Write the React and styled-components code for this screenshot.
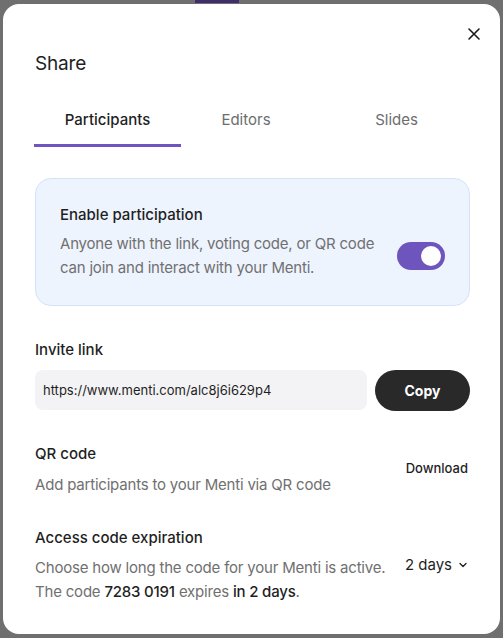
import React, { useState } from 'react';
import styled, { createGlobalStyle } from 'styled-components';

const GlobalStyle = createGlobalStyle`
  html, body {
    margin: 0;
    padding: 0;
    background: #6f6f6f;
  }
  body {
    font-family: Inter, "Noto Sans", Arial, sans-serif;
    color: #1f1f1f;
    -webkit-font-smoothing: antialiased;
  }
`;

const Backdrop = styled.div`
  width: 503px;
  height: 638px;
  overflow: hidden;
  display: flex;
  flex-direction: column;
`;

const BehindBar = styled.div`
  width: 44px;
  height: 3px;
  margin-left: 195px;
  background: #3e2e6b;
  flex-shrink: 0;
`;

const Modal = styled.div`
  margin: 1px 3px 0 3px;
  height: 630px;
  background: #fff;
  border-radius: 16px;
  padding: 0 30px 0 32px;
  box-sizing: border-box;
  display: flex;
  flex-direction: column;
`;

const TopRow = styled.div`
  display: flex;
  justify-content: flex-end;
  padding-top: 20px;
  margin-right: -14px;
`;

const CloseButton = styled.button`
  width: 20px;
  height: 20px;
  border: none;
  background: none;
  padding: 0;
  display: flex;
  align-items: center;
  justify-content: center;
  cursor: pointer;
  color: #1a1a1a;
`;

const Title = styled.h2`
  margin: 8px 0 0 0;
  font-size: 19px;
  font-weight: 400;
  line-height: 24px;
  letter-spacing: -0.2px;
`;

const Tabs = styled.div`
  display: grid;
  grid-template-columns: 147px 130px 1fr;
  margin-top: 33px;
  margin-left: -1px;
  margin-right: 3px;
`;

const Tab = styled.button`
  border: none;
  background: none;
  font-family: inherit;
  font-size: 15px;
  font-weight: ${({ $active }) => ($active ? 500 : 400)};
  color: ${({ $active }) => ($active ? '#1f1f1f' : '#6d6d6d')};
  padding: 0 0 13px ${({ $indent }) => $indent || 0}px;
  line-height: 22px;
  border-bottom: 3px solid ${({ $active }) => ($active ? '#7055c2' : 'transparent')};
  cursor: pointer;
`;

const Card = styled.div`
  margin-top: 31px;
  background: #eef4fe;
  border: 1px solid #d3e2fb;
  border-radius: 16px;
  padding: 24px 24px 25px;
  display: flex;
  align-items: flex-end;
  justify-content: space-between;
  box-sizing: border-box;
  height: 128px;
`;

const CardText = styled.div`
  display: flex;
  flex-direction: column;
`;

const Heading = styled.div`
  font-size: 15px;
  font-weight: 500;
  line-height: 22px;
  color: #1f1f1f;
`;

const Description = styled.div`
  font-size: 15px;
  line-height: 24px;
  letter-spacing: -0.2px;
  color: #707070;
  margin-top: ${({ $mt }) => $mt || 6}px;

  b {
    font-weight: 500;
    color: #1f1f1f;
  }
`;

const SwitchTrack = styled.button`
  width: 48px;
  height: 28px;
  border-radius: 14px;
  border: none;
  padding: 4px;
  background: ${({ $on }) => ($on ? '#6d55bd' : '#c4c4c4')};
  display: flex;
  justify-content: ${({ $on }) => ($on ? 'flex-end' : 'flex-start')};
  align-items: center;
  margin-bottom: 10px;
  cursor: pointer;
  box-sizing: border-box;
`;

const Knob = styled.span`
  width: 20px;
  height: 20px;
  border-radius: 50%;
  background: #fff;
`;

const Section = styled.div`
  margin-top: ${({ $mt }) => $mt}px;
  display: flex;
  flex-direction: column;
`;

const LinkRow = styled.div`
  display: flex;
  gap: 8px;
  margin-top: 9px;
`;

const LinkInput = styled.input`
  flex: 1;
  height: 40px;
  border: none;
  border-radius: 8px;
  background: #f3f3f5;
  padding: 0 8px;
  font-family: inherit;
  font-size: 13px;
  color: #1f1f1f;
  box-sizing: border-box;
  &:focus { outline: none; }
`;

const DarkButton = styled.button`
  width: 95px;
  height: 41px;
  border: none;
  border-radius: 21px;
  background: #292929;
  color: #fff;
  font-family: inherit;
  font-size: 14px;
  font-weight: 700;
  cursor: pointer;
`;

const SplitRow = styled.div`
  display: flex;
  justify-content: space-between;
  align-items: flex-start;
`;

const TextButton = styled.button`
  border: none;
  background: none;
  padding: 0;
  font-family: inherit;
  font-size: 13px;
  font-weight: 500;
  color: #1f1f1f;
  margin-top: 17px;
  margin-right: 2px;
  cursor: pointer;
`;

const Select = styled.button`
  border: none;
  background: none;
  padding: 0;
  font-family: inherit;
  font-size: 15px;
  color: #1f1f1f;
  display: flex;
  align-items: center;
  gap: 6px;
  margin-top: 6px;
  margin-right: 2px;
  cursor: pointer;
`;

const tabs = [
  { name: 'Participants' },
  { name: 'Editors' },
  { name: 'Slides', indent: 15 },
];

export default function App() {
  const [tab, setTab] = useState('Participants');
  const [enabled, setEnabled] = useState(true);

  return (
    <>
      <GlobalStyle />
      <Backdrop>
        <BehindBar />
        <Modal>
          <TopRow>
            <CloseButton aria-label="Close">
              <svg width="14" height="14" viewBox="0 0 14 14" fill="none" stroke="currentColor" strokeWidth="1.6" strokeLinecap="round">
                <path d="M2 2l10 10M12 2L2 12" />
              </svg>
            </CloseButton>
          </TopRow>
          <Title>Share</Title>
          <Tabs>
            {tabs.map((t) => (
              <Tab key={t.name} $active={tab === t.name} $indent={t.indent} onClick={() => setTab(t.name)}>
                {t.name}
              </Tab>
            ))}
          </Tabs>

          <Card>
            <CardText>
              <Heading>Enable participation</Heading>
              <Description $mt={6}>
                Anyone with the link, voting code, or QR code<br />
                can join and interact with your Menti.
              </Description>
            </CardText>
            <SwitchTrack $on={enabled} onClick={() => setEnabled(!enabled)} aria-label="Enable participation">
              <Knob />
            </SwitchTrack>
          </Card>

          <Section $mt={33}>
            <Heading>Invite link</Heading>
            <LinkRow>
              <LinkInput readOnly value="https://www.menti.com/alc8j6i629p4" />
              <DarkButton>Copy</DarkButton>
            </LinkRow>
          </Section>

          <Section $mt={32}>
            <SplitRow>
              <div>
                <Heading>QR code</Heading>
                <Description $mt={8}>Add participants to your Menti via QR code</Description>
              </div>
              <TextButton>Download</TextButton>
            </SplitRow>
          </Section>

          <Section $mt={30}>
            <Heading>Access code expiration</Heading>
            <SplitRow>
              <Description $mt={7}>
                Choose how long the code for your Menti is active.<br />
                The code <b>7283 0191</b> expires <b>in 2 days</b>.
              </Description>
              <Select>
                2 days
                <svg width="10" height="10" viewBox="0 0 10 10" fill="none" stroke="currentColor" strokeWidth="1.3" strokeLinecap="round" strokeLinejoin="round">
                  <path d="M2 3.5l3 3 3-3" />
                </svg>
              </Select>
            </SplitRow>
          </Section>
        </Modal>
      </Backdrop>
    </>
  );
}
